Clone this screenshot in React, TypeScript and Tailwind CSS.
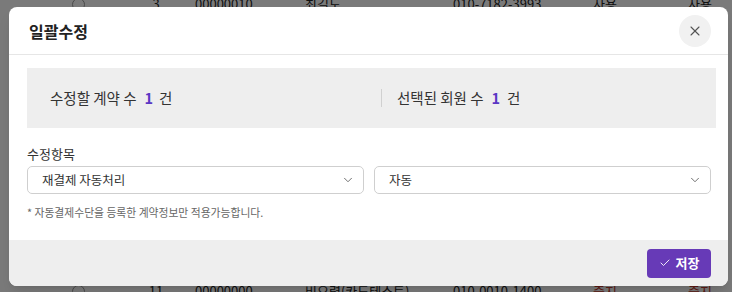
import React from "react";
import { X, ChevronDown, Check } from "lucide-react";

const font = { fontFamily: '"Noto Sans CJK KR", "Noto Sans", sans-serif' };

function BgRow({ no, id, name, phone, a, b, red }: { no: string; id: string; name: string; phone: string; a: string; b: string; red?: boolean }) {
    const tone = red ? "text-[#c0392b]" : "text-[#222]";
    return (
        <div className="flex h-[30px] items-center text-[13px] text-[#222]">
            <span className="ml-[72px] h-[13px] w-[13px] rounded-full border border-[#999]" />
            <span className="ml-[46px] w-[50px] text-center">{no}</span>
            <span className="ml-[14px] w-[110px]">{id}</span>
            <span className="w-[148px]">{name}</span>
            <span className="w-[140px]">{phone}</span>
            <span className={`w-[95px] ${tone}`}>{a}</span>
            <span className={tone}>{b}</span>
        </div>
    );
}

function SelectBox({ value, className }: { value: string; className: string }) {
    return (
        <div className={`flex h-[28px] items-center justify-between rounded-[5px] border border-[#cfcfcf] bg-white pl-[14px] pr-[8px] text-[12.5px] text-[#333] ${className}`}>
            <span>{value}</span>
            <ChevronDown className="h-[14px] w-[14px] text-[#666]" strokeWidth={1.6} />
        </div>
    );
}

export default function App() {
    return (
        <div className="relative h-[292px] w-[732px] overflow-hidden bg-white" style={font}>
            {/* table behind the dimmer */}
            <div className="flex h-full flex-col justify-between">
                <div className="-mt-[11px]">
                    <BgRow no="3" id="00000010" name="최길도" phone="010-7182-3993" a="사용" b="사용" />
                </div>
                <div className="-mb-[14px]">
                    <BgRow no="11" id="00000000" name="비요령(카드테스트)" phone="010-0010-1400" a="중지" b="중지" red />
                </div>
            </div>
            <div className="absolute inset-0 bg-black/[0.52]" />

            {/* modal */}
            <div className="absolute left-[9px] top-[7px] flex h-[279px] w-[719px] flex-col overflow-hidden rounded-[8px] bg-white shadow-lg">
                <div className="flex h-[48px] shrink-0 items-center justify-between border-b border-[#e6e6e6] pl-[20px] pr-[17px]">
                    <h2 className="text-[16px] font-bold text-[#222]">일괄수정</h2>
                    <button className="flex h-[32px] w-[32px] items-center justify-center rounded-full bg-[#f1f1f1]">
                        <X className="h-[16px] w-[16px] text-[#555]" strokeWidth={1.6} />
                    </button>
                </div>

                <div className="flex flex-1 flex-col pl-[18px] pr-[12px] pt-[13px]">
                    <div className="flex h-[60px] items-center bg-[#eeeeee] text-[14.5px] text-[#333]">
                        <div className="w-[354px] pl-[23px]">
                            수정할 계약 수<span className="ml-[8px] mr-[6px] font-semibold text-[#5b37c4]">1</span>건
                        </div>
                        <div className="border-l border-[#d0d0d0] pl-[15px] leading-[18px]">
                            선택된 회원 수<span className="ml-[8px] mr-[7px] font-semibold text-[#5b37c4]">1</span>건
                        </div>
                    </div>

                    <div className="mt-[17px] pr-[5px]">
                        <div className="text-[13px] leading-[18px] text-[#333]">수정항목</div>
                        <div className="mt-[3px] flex gap-[10px]">
                            <SelectBox value="재결제 자동처리" className="w-[337px]" />
                            <SelectBox value="자동" className="flex-1" />
                        </div>
                        <p className="mt-[11px] text-[10.8px] leading-[14px] text-[#666]">* 자동결제수단을 등록한 계약정보만 적용가능합니다.</p>
                    </div>
                </div>

                <div className="flex h-[46px] shrink-0 items-center justify-end bg-[#eeeeee] pr-[17px]">
                    <button className="flex h-[29px] w-[64px] items-center justify-center gap-[5px] rounded-[4px] bg-[#673ab7] text-[13px] font-bold text-white">
                        <Check className="h-[12px] w-[12px]" strokeWidth={1.8} />
                        저장
                    </button>
                </div>
            </div>
        </div>
    );
}
